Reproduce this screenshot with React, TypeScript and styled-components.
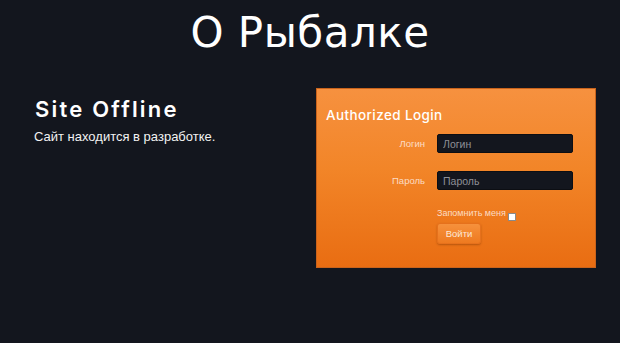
import React from "react";
import styled, { createGlobalStyle } from "styled-components";

const Global = createGlobalStyle`
  html, body { margin: 0; padding: 0; background: #13161e; }
  body { min-height: 343px; font-family: "Liberation Sans", Arial, sans-serif; }
  * { box-sizing: border-box; }
`;

const Page = styled.div`
  width: 620px;
  min-height: 343px;
  background: #13161e;
  color: #ffffff;
`;

const Header = styled.header`
  padding-top: 8px;
  text-align: center;
`;

const Title = styled.h1`
  margin: 0;
  font-family: "DejaVu Sans", sans-serif;
  font-weight: normal;
  font-size: 42px;
  line-height: 50px;
  letter-spacing: 0.5px;
  color: #ffffff;
`;

const Main = styled.main`
  display: flex;
  padding: 30px 24px 0 34px;
`;

const Info = styled.section`
  flex: 1;
  padding-top: 8px;
`;

const Heading = styled.h2`
  margin: 0 0 0 1px;
  font-family: Inter, sans-serif;
  font-weight: 600;
  font-size: 22px;
  line-height: 26px;
  letter-spacing: 2.2px;
  color: #ffffff;
`;

const Note = styled.p`
  margin: 7px 0 0;
  font-family: "Liberation Sans", Arial, sans-serif;
  font-size: 13px;
  line-height: 15px;
  color: #f2f2f2;
`;

const Panel = styled.section`
  width: 280px;
  height: 180px;
  border: 1px solid #c9631c;
  background: linear-gradient(to bottom, #f6913f 0%, #f28528 45%, #e96d12 100%);
  padding-top: 18px;
`;

const PanelTitle = styled.h3`
  margin: 0 0 10px 9px;
  font-family: Inter, sans-serif;
  font-weight: 500;
  font-size: 13.5px;
  line-height: 17px;
  letter-spacing: 0.4px;
  color: #ffffff;
`;

const Form = styled.form`
  display: grid;
  grid-template-columns: 120px 136px;
  row-gap: 18px;
  align-items: center;
`;

const Label = styled.label`
  text-align: right;
  padding-right: 12px;
  font-size: 9.5px;
  color: #fcdcc4;
`;

const Input = styled.input`
  width: 136px;
  height: 19px;
  margin: 0;
  padding: 0 5px;
  border: 1px solid #0c0e13;
  border-radius: 2px;
  background: #13161e;
  color: #e0e0e0;
  font-family: "Liberation Sans", Arial, sans-serif;
  font-size: 10.5px;
  &::placeholder { color: #8e9096; }
  outline: none;
`;

const Remember = styled.div`
  grid-column: 2;
  display: flex;
  flex-direction: column;
  align-items: flex-start;
  gap: 4px;
`;

const RememberLine = styled.label`
  display: flex;
  align-items: flex-end;
  font-size: 9px;
  line-height: 11px;
  color: #fcdcc4;
`;

const Check = styled.span`
  display: inline-block;
  width: 8px;
  height: 8px;
  margin-left: 2px;
  margin-bottom: -2px;
  background: #ffffff;
  border: 1px solid #8a8a8a;
`;

const Button = styled.button`
  width: 44px;
  height: 21px;
  padding: 0;
  border: 1px solid #e6711c;
  border-radius: 3px;
  background: linear-gradient(to bottom, #f6913c, #ee7a20);
  box-shadow: 0 1px 2px rgba(120, 50, 0, 0.45);
  color: #fde8d8;
  font-family: "Liberation Sans", Arial, sans-serif;
  font-size: 9.5px;
`;

export default function App() {
  return (
    <>
      <Global />
      <Page>
        <Header>
          <Title>О Рыбалке</Title>
        </Header>
        <Main>
          <Info>
            <Heading>Site Offline</Heading>
            <Note>Сайт находится в разработке.</Note>
          </Info>
          <Panel>
            <PanelTitle>Authorized Login</PanelTitle>
            <Form onSubmit={(e) => e.preventDefault()}>
              <Label htmlFor="login">Логин</Label>
              <Input id="login" placeholder="Логин" />
              <Label htmlFor="pass">Пароль</Label>
              <Input id="pass" type="password" placeholder="Пароль" />
              <Remember>
                <RememberLine>
                  Запомнить меня<Check />
                </RememberLine>
                <Button type="button">Войти</Button>
              </Remember>
            </Form>
          </Panel>
        </Main>
      </Page>
    </>
  );
}
